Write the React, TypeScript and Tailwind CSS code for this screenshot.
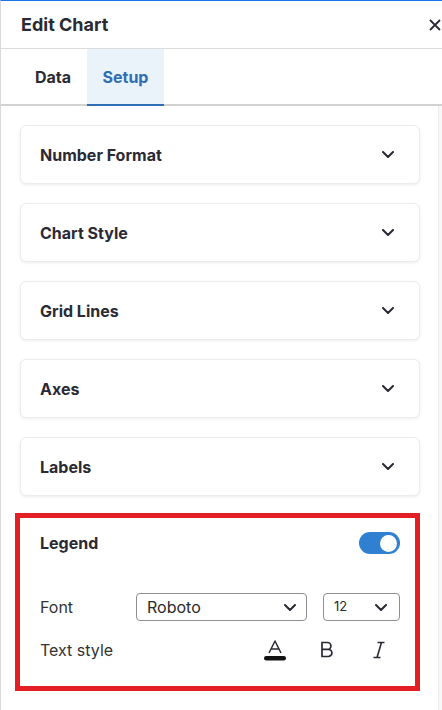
import { useState } from 'react';

const sections = ['Number Format', 'Chart Style', 'Grid Lines', 'Axes', 'Labels'];

function Chevron({ className = '' }: { className?: string }) {
  return (
    <svg width="12" height="7" viewBox="0 0 12 7" fill="none" className={className}>
      <path d="M1 1l5 5 5-5" stroke="currentColor" strokeWidth="2" strokeLinecap="round" strokeLinejoin="round" />
    </svg>
  );
}

function SectionCard({ title }: { title: string }) {
  return (
    <div className="h-[59px] flex items-center justify-between pl-[19px] pr-[25px] bg-white rounded-[6px] border border-[#ececec] shadow-[0_1px_3px_rgba(0,0,0,0.08)]">
      <span className="text-[16px] font-bold text-[#2a2a35]">{title}</span>
      <Chevron className="text-[#2a2a35]" />
    </div>
  );
}

export default function App() {
  const [on, setOn] = useState(true);

  return (
    <div
      className="w-[442px] h-[710px] flex flex-col bg-white border-l border-[#d9d9d9] border-t border-t-[#1a73e8] overflow-hidden"
      style={{ fontFamily: 'Inter, "Noto Sans", sans-serif' }}
    >
      {/* header */}
      <div className="h-[48px] shrink-0 flex items-center justify-between pl-[20px] pr-[1px] border-b border-[#dcdcdc]">
        <span className="text-[18px] font-bold text-[#2a2a33]">Edit Chart</span>
        <svg width="12" height="12" viewBox="0 0 12 12" className="text-[#2a2a33]">
          <path d="M1 1l10 10M11 1L1 11" stroke="currentColor" strokeWidth="1.8" />
        </svg>
      </div>

      {/* tabs */}
      <div className="h-[57px] shrink-0 flex border-b-2 border-[#d2d2d2]">
        <div className="w-[86px] pl-[34px] flex items-center text-[16px] font-bold text-[#2a2a33]">Data</div>
        <div className="w-[77px] -mb-[2px] flex items-center justify-center bg-[#eaf2fa] border-b-2 border-[#2f6db5] text-[16px] font-bold text-[#2f6db5]">
          Setup
        </div>
      </div>

      <div className="flex-1 flex min-h-0">
        <div className="flex-1 flex flex-col gap-[19px] pt-[19px] pl-[19px] pr-[18px]">
          {sections.map((s) => (
            <SectionCard key={s} title={s} />
          ))}

          {/* legend */}
          <div className="-mt-[2px] ml-[-5px] w-[405px] border-[5px] border-[#e41e25] bg-white pl-[20px] pr-[15px] pt-[14px] pb-[24px]">
            <div className="h-[22px] flex items-center justify-between">
              <span className="text-[16px] font-bold text-[#2a2a35]">Legend</span>
              <button
                onClick={() => setOn(!on)}
                className="w-[41px] h-[22px] rounded-full bg-[#2f80d0] flex items-center justify-end pr-[3px]"
              >
                <span className="w-[17px] h-[17px] rounded-full bg-white" />
              </button>
            </div>

            <div className="mt-[39px] h-[28px] flex items-center">
              <span className="w-[96px] text-[16px] text-[#333]">Font</span>
              <div className="w-[171px] h-[28px] flex items-center justify-between pl-[10px] pr-[10px] border border-[#8f8f8f] rounded-[4px] text-[16px] text-[#2a2a2a]">
                <span>Roboto</span>
                <Chevron className="text-[#2a2a35]" />
              </div>
              <div className="ml-[16px] w-[77px] h-[28px] flex items-center justify-between pl-[10px] pr-[12px] border border-[#8f8f8f] rounded-[4px] text-[13px] text-[#2a2a2a]">
                <span>12</span>
                <Chevron className="text-[#2a2a35]" />
              </div>
            </div>

            <div className="mt-[17px] h-[24px] flex items-center">
              <span className="flex-1 text-[16px] text-[#333]">Text style</span>
              <div className="flex items-center gap-[28px] mr-[9px] text-[#2a2a35]">
                <svg width="24" height="22" viewBox="0 0 24 22" fill="none">
                  <path d="M6 14L12 2l6 12M8.3 10h7.4" stroke="currentColor" strokeWidth="1.5" strokeLinejoin="round" />
                  <rect x="1" y="17" width="22" height="4.5" rx="2.25" fill="#111" />
                </svg>
                <svg width="24" height="18" viewBox="0 0 24 18" fill="none">
                  <path d="M7 1.5h5.5a3.4 3.4 0 0 1 0 6.8H7zM7 8.3h6.3a3.6 3.6 0 0 1 0 7.2H7z" stroke="currentColor" strokeWidth="1.7" />
                </svg>
                <svg width="24" height="18" viewBox="0 0 24 18" fill="none">
                  <path d="M10.5 1.5h7M6.5 16.5h7M14.5 1.5l-4.5 15" stroke="currentColor" strokeWidth="1.6" />
                </svg>
              </div>
            </div>
          </div>
        </div>
        <div className="w-[5px] shrink-0 bg-[#f8f8f8] border-l border-[#ececec]" />
      </div>
    </div>
  );
}
